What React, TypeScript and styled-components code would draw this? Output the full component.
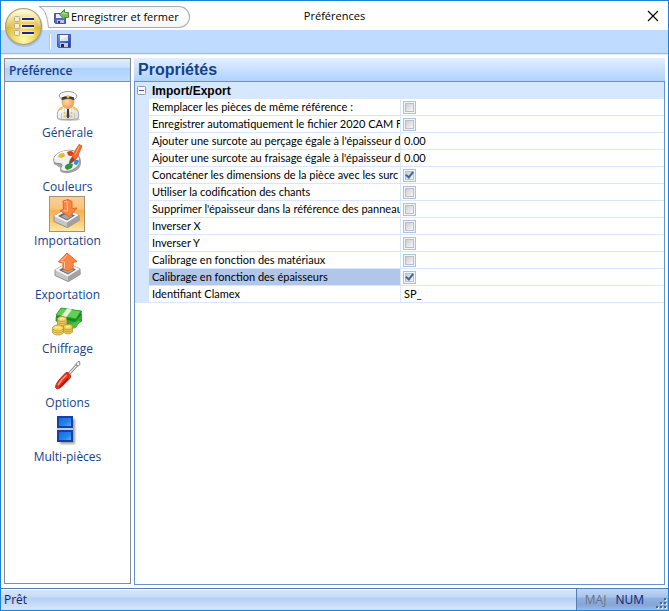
import React, { useState } from "react";
import styled, { createGlobalStyle } from "styled-components";

const GlobalStyle = createGlobalStyle`
  *, *::before, *::after { box-sizing: border-box; }
  body { margin: 0; }
  button, input { font: inherit; color: inherit; margin: 0; padding: 0; border: 0; background: none; }
`;

const uiFont = `"Open Sans", "Noto Sans", sans-serif`;
const headingFont = `"Liberation Sans", Arial, sans-serif`;
const gridFont = `Lato, "Liberation Sans", sans-serif`;

const Window = styled.div`
  display: flex;
  flex-direction: column;
  min-height: 100vh;
  border: 1px solid #1883d7;
  background: #fff;
  font: 12px/18px ${uiFont};
  color: #000;
`;

const TopArea = styled.header`
  display: grid;
  grid-template-columns: 48px 1fr;
  grid-template-rows: 29px 23px;
  background: linear-gradient(#fff 29px, #bfdbff 29px);
  border-bottom: 1px solid #9fbde4;
  box-shadow: 0 1px #e3eefb;
`;

const AppButton = styled.button`
  grid-area: 1 / 1 / 3 / 2;
  display: flex;
  align-items: flex-start;
  padding: 5px 0 0 2px;
`;

const QuickBar = styled.div`
  grid-area: 1 / 2;
  justify-self: start;
  display: flex;
  height: 27px;
  padding-top: 5px;
  margin-left: -10px;
`;

const QuickShape = styled.svg`
  flex: none;
  width: 10px;
  height: 22px;
`;

const SaveClose = styled.button`
  display: flex;
  align-items: center;
  gap: 1px;
  height: 22px;
  padding: 0 10px 0 4px;
  border: solid #a9adb3;
  border-width: 1px 1px 1px 0;
  border-radius: 0 11px 11px 0;
  background: linear-gradient(#f2f4f7, #fff 40%, #f3f5f8);
  font-size: 11px;
  white-space: nowrap;
`;

const Title = styled.h1`
  grid-area: 1 / 1 / 2 / 3;
  place-self: center;
  margin: 0;
  font-size: 11px;
  font-weight: 400;
  pointer-events: none;
`;

const CloseButton = styled.button`
  grid-area: 1 / 2;
  place-self: center end;
  display: flex;
  margin-right: 5px;
  padding: 4px;
`;

const Toolbar = styled.div`
  grid-area: 2 / 2;
  display: flex;
  align-items: center;
  gap: 5px;
  padding-bottom: 1px;
`;

const ToolSeparator = styled.span`
  width: 2px;
  height: 15px;
  border-left: 1px solid #a8c6ee;
  border-right: 1px solid #fff;
`;

const ToolButton = styled.button`
  display: flex;
`;

const Content = styled.main`
  flex: 1;
  display: grid;
  grid-template-columns: 127px minmax(0, 1fr);
  gap: 3px;
  padding: 4px 3px 3px;
`;

const Sidebar = styled.nav`
  border: 1px solid #858b93;
  margin-bottom: 1px;
`;

const SidebarHeading = styled.h2`
  margin: 0;
  height: 23px;
  padding: 0 4px;
  border-bottom: 1px solid #6593cf;
  background: linear-gradient(#e3efff, #c4ddff 9px, #add1ff 9px, #c0dbff);
  color: #15428b;
  font-size: 12px;
  line-height: 24px;
  font-weight: 600;
`;

const NavList = styled.div`
  display: flex;
  flex-direction: column;
  align-items: center;
  padding-top: 6px;
`;

const NavButton = styled.button`
  display: flex;
  flex-direction: column;
  align-items: center;
  color: #15428b;
  white-space: nowrap;
`;

const NavTile = styled.span<{ $active: boolean }>`
  display: flex;
  width: 36px;
  height: 36px;
  padding: 1px;
  border: 1px solid ${(p) => (p.$active ? "#a8916c" : "transparent")};
  background: ${(p) => (p.$active ? "linear-gradient(#f8cf9f, #fbc27a 35%, #fdb14c 40%, #fdc769 70%, #ffe9a6)" : "none")};
`;

const Panel = styled.section`
  display: flex;
  flex-direction: column;
`;

const PanelHeading = styled.h2`
  margin: 0;
  height: 24px;
  padding: 0 4px;
  border-bottom: 1px solid #6593cf;
  background: linear-gradient(#e3efff, #afd2ff);
  color: #15428b;
  font: 700 16px/24px ${headingFont};
`;

const PanelBody = styled.div`
  flex: 1;
  border: 1px solid #6593cf;
  border-top: 0;
`;

const Grid = styled.table`
  width: 100%;
  table-layout: fixed;
  border-spacing: 0;
  font: 11px/16px ${gridFont};
`;

const GutterCol = styled.col`
  width: 14px;
`;

const NameCol = styled.col`
  width: 252px;
`;

const Gutter = styled.td`
  height: 17px;
  padding: 0;
  background: #d6e7ff;
`;

const CategoryName = styled.th`
  height: 17px;
  padding: 0 3px;
  background: #d6e7ff;
  text-align: left;
  font: 700 12px/16px ${headingFont};
`;

const Expander = styled.button`
  display: flex;
  margin: 0 2px;
`;

const NameCell = styled.th<{ $selected: boolean }>`
  height: 17px;
  padding: 0 0 0 3px;
  border: solid #d6e7ff;
  border-width: 0 1px 1px 0;
  background: ${(p) => (p.$selected ? "#b1c6e8" : "#fff")};
  background-clip: padding-box;
  overflow: hidden;
  white-space: nowrap;
  text-align: left;
  font-weight: 400;
`;

const ValueCell = styled.td`
  height: 17px;
  padding: 0 0 0 2px;
  border-bottom: 1px solid #d6e7ff;
`;

const TextValue = styled.input`
  display: block;
  width: 100%;
  height: 16px;
  padding: 0 1px;
  outline: none;
`;

const Check = styled.input`
  appearance: none;
  display: block;
  width: 13px;
  height: 13px;
  border: 1px solid #abc1de;
  background:
    linear-gradient(135deg, #cbcfd5, #f6f6f6) center / 7px 7px no-repeat,
    linear-gradient(#b8bfc9, #b8bfc9) center / 9px 9px no-repeat,
    #f4f4f4;
  &:checked::after {
    content: "";
    display: block;
    width: 5px;
    height: 8px;
    margin: 0 0 0 3px;
    border: solid #3c6aa5;
    border-width: 0 2px 2px 0;
    transform: rotate(38deg);
  }
`;

const StatusBar = styled.footer`
  display: flex;
  height: 22px;
  border-top: 1px solid #567db0;
  background: linear-gradient(#fff 1px, #d7e6f9 1px, #c7dcf8 8px, #b3d0f5 9px, #d7e5f7 20px, #c4daf8);
  color: #15256b;
  line-height: 21px;
`;

const StatusText = styled.span`
  flex: 1;
  padding: 0 3px;
`;

const StatusPane = styled.div`
  display: flex;
  align-items: center;
  gap: 9px;
  padding-left: 8px;
  border-left: 1px solid #567db0;
  background: linear-gradient(#c0d6f5, #a9c4ec 8px, #8fb0e0 9px, #84a5d8 16px, #9dbbe6);
`;

const KeyState = styled.span<{ $on: boolean }>`
  color: ${(p) => (p.$on ? "#14206b" : "#6f747c")};
`;

const Grip = styled.svg`
  align-self: flex-end;
  width: 14px;
  height: 14px;
  margin-left: 1px;
`;

const OrbIcon = () => (
  <svg width="41" height="42" viewBox="0 0 41 42" aria-hidden="true">
    <defs>
      <radialGradient id="orb" cx="50%" cy="86%" r="88%">
        <stop offset="0" stopColor="#fff9b5" />
        <stop offset=".35" stopColor="#f1d85d" />
        <stop offset=".62" stopColor="#d9b644" />
        <stop offset="1" stopColor="#fff4c2" />
      </radialGradient>
      <linearGradient id="orbTop" x1="0" x2="0" y1="0" y2="1">
        <stop offset="0" stopColor="#fffbe2" />
        <stop offset="1" stopColor="#efd36e" stopOpacity=".3" />
      </linearGradient>
    </defs>
    <circle cx="21" cy="22" r="19" fill="#7e91b0" opacity=".35" />
    <circle cx="20.500" cy="20.500" r="18" fill="url(#orb)" stroke="#a7a383" strokeWidth="1.200" />
    <path d="M4 20C3 10 11 4 20.500 4S38 10 37 20Q20 25 4 20Z" fill="url(#orbTop)" />
    {[10, 17, 24].map((y) => (
      <g key={y}>
        <rect x="11.500" y={y + 0.5} width="5" height="5" rx="1" fill="#f3ecd6" stroke="#b5ad90" />
        <path d={`M18 ${y + 3.5}h13`} stroke="#fff5a8" strokeWidth="4" />
        <path d={`M19 ${y + 3}h12`} stroke="#20249a" strokeWidth="2" />
      </g>
    ))}
  </svg>
);

const DiskIcon = () => (
  <svg width="16" height="16" viewBox="0 0 16 16" aria-hidden="true">
    <defs>
      <linearGradient id="disk" x2="1" y2="1">
        <stop stopColor="#8aa4f1" />
        <stop offset=".5" stopColor="#4d69cc" />
        <stop offset="1" stopColor="#252984" />
      </linearGradient>
    </defs>
    <path d="M1.500 1.500h13v13h-12l-1-1Z" fill="url(#disk)" stroke="#4a58b4" />
    <path d="M4 2h8v6H4Z" fill="#f5f9ff" />
    <path d="M4 7l8-4v5H4Z" fill="#d5e2f7" />
    <path d="M4 10h8v4H4Z" fill="#c6cad7" />
    <path d="M5 11h3v3H5Z" fill="#202762" />
  </svg>
);

const SaveCloseIcon = () => (
  <svg width="17" height="16" viewBox="0 0 17 16" aria-hidden="true">
    <path d="M1.500 4.500h11v10h-10l-1-1Z" fill="#5269c3" stroke="#4a52a0" />
    <path d="M3 5h6v4H3Z" fill="#e9f1ff" />
    <path d="M4 11h7v3H4Z" fill="#bfc4d5" />
    <path d="M5 12h2v2H5Z" fill="#252a61" />
    <path d="M6.500 5.500l5-5v3h4v5h-4v2.500Z" fill="#7dbb5f" stroke="#4a8c42" />
    <path d="M9 5l2-1.500v1h3" fill="none" stroke="#b7e59d" />
  </svg>
);

const CaptainIcon = () => (
  <svg width="32" height="32" viewBox="0 0 32 32" aria-hidden="true">
    <defs>
      <linearGradient id="coat" x2="1" y2="1">
        <stop stopColor="#fff" />
        <stop offset="1" stopColor="#d9d9d9" />
      </linearGradient>
      <radialGradient id="face" cx="40%" cy="40%">
        <stop stopColor="#ffdca8" />
        <stop offset="1" stopColor="#f9a758" />
      </radialGradient>
    </defs>
    <ellipse cx="17" cy="29.500" rx="11" ry="1.500" fill="#c4c4c4" />
    <path d="M5.500 28.500q-1-8 3-10.500l4-2h7l4 2q4 2.500 3 10.500l-4 1H9.500Z" fill="url(#coat)" stroke="#a9a9a9" />
    <path d="M12 16.500l4 3 4-3-2 12h-4Z" fill="#fff" stroke="#d0d0d0" strokeWidth=".7" />
    <path d="M15 19h2l.5 8-1.500 1.500-1.500-1.500Z" fill="#3a3d44" />
    <path d="M10 10q0 8.500 6 8.500t6-8.500l-2-3h-8Z" fill="url(#face)" stroke="#e39a50" strokeWidth=".8" />
    <path d="M7 6q1-4.500 9.500-4.500 7.500 0 8.500 5.500l-3 3q-5-3-12 0Z" fill="#f7f7f7" stroke="#9c9c9c" />
    <path d="M9.500 7.500q6-3 12.500 0v2.500q-6-3-12 0Z" fill="#33363d" />
    <circle cx="16" cy="6.500" r="1.500" fill="#f4c537" />
    <path d="M6 19.500l3.500-2 2 1-4.500 2.500ZM26 19.500l-3.500-2-2 1 4.500 2.500Z" fill="#f3c93e" />
    <path d="M9.500 23v6M22.500 23v6" stroke="#bbb" strokeWidth=".8" />
    <circle cx="12.500" cy="23" r="1" fill="#ebbd36" />
    <circle cx="19.500" cy="23" r="1" fill="#ebbd36" />
    <circle cx="12.500" cy="26.500" r="1" fill="#ebbd36" />
    <circle cx="19.500" cy="26.500" r="1" fill="#ebbd36" />
  </svg>
);

const PaletteIcon = () => (
  <svg width="32" height="32" viewBox="0 0 32 32" aria-hidden="true">
    <path d="M3 18Q3 10 12 8q12-3 15 2 5 6 2 13-5 7-16 6-6-1-3-5-3-1-5-3-3 0-2-3Z" fill="#a6a6a6" />
    <path d="M2.500 16.500Q3 10 11 7.500q10-3 15 1 4 6 2 12-5 7-14 7-6-1-4-4 3-4-2-4-5 0-5.500-3Z" fill="#f0f0f0" stroke="#8c8c8c" />
    <path d="M4 15q1-5 8-7 8-2 12 1" fill="none" stroke="#fff" strokeWidth="1.500" />
    <path d="M7 13q1-4 6-4l1 3-3 2Z" fill="#e9bd27" />
    <path d="M16 8q4-2 6 0l1 3q-4 2-6 0Z" fill="#e8371e" />
    <path d="M24 16q3-1 4 1l-2 4q-4 0-3-3Z" fill="#3c86e6" />
    <path d="M14 22q3-4 8-2l-1 4-5 2-2-2Z" fill="#269744" />
    <path d="M18 20q0-5 4-8l3 2q-1 4-7 6Z" fill="#8a5224" />
    <path d="M21 12L28 .5l3 1.500-5.500 12.500-1.500 1Z" fill="#f46a2c" stroke="#e2602a" />
    <path d="M24 11l4.500-9" stroke="#ffb27b" />
  </svg>
);

const TrayIcon = ({ down }: { down: boolean }) => (
  <svg width="32" height="32" viewBox="0 0 32 32" aria-hidden="true">
    <path d="M4 23l13 7 12-8-1-3-12 6Z" fill="#555" opacity=".35" />
    <path d="M3 18l12-7 13 6v5.500l-12 7-13-6Z" fill="#c6c6c6" stroke="#929292" />
    <path d="M3 18l12-7 13 6-12 7.500Z" fill="#f6f6f6" />
    <path d="M7 18l8-4.500 9 4-8 5Z" fill="#666" />
    <path d="M10 18.500l6-3.500 6 3-6 3.500Z" fill="#a7a7a7" />
    <path d="M16 24.500v5l12-7v-5.500Z" fill="#a2a2a2" />
    {down ? (
      <>
        <path d="M12 3l5-1.500 4 2v7l5-.5-7.500 9L9 12.500l3.500-1Z" fill="#fa8644" stroke="#e06a2c" strokeLinejoin="round" />
        <path d="M13 4l3-1 .5 10-4-.5" fill="none" stroke="#ffc49b" />
      </>
    ) : (
      <>
        <path d="M15 1L6.500 10l4.500 1v6l5 2 5-2.500v-6l4-1Z" fill="#fa8644" stroke="#e06a2c" strokeLinejoin="round" />
        <path d="M15 3L9 9.500l3.500.5v6.500" fill="none" stroke="#ffc49b" />
      </>
    )}
  </svg>
);

const MoneyIcon = () => (
  <svg width="32" height="32" viewBox="0 0 32 32" aria-hidden="true">
    <path d="M5 10l5-8 21 3-1 5 1 5-8 6-18-6Z" fill="#178a24" />
    <path d="M5 9l5-7 20 3-5 8Z" fill="#5fd150" stroke="#259a31" strokeWidth=".8" />
    <path d="M16 2.800l5 .8-6 8-5-1.200Z" fill="#e6f4dd" />
    <path d="M5 11l19 4.500 6.500-7.500v5l-6 7L5 15Z" fill="#35a838" stroke="#167f29" strokeWidth=".6" />
    <path d="M11 12.500l5 1.200v4l-5-1.200Z" fill="#d8e9cd" />
    <path d="M15 19l10-3 5-2-5 8-8 2Z" fill="#49c243" />
    {[19, 17, 15, 13].map((y) => (
      <ellipse key={y} cx="11" cy={y} rx="4.500" ry="2.500" fill="#f0d468" stroke="#b58e2c" strokeWidth=".8" />
    ))}
    {[25, 23, 21].map((y) => (
      <ellipse key={y} cx="17" cy={y} rx="4.500" ry="2.800" fill="#f0cf58" stroke="#b58e2c" strokeWidth=".8" />
    ))}
    {[26, 24, 22].map((y) => (
      <ellipse key={y} cx="7" cy={y} rx="5.500" ry="3" fill="#f7dc68" stroke="#b58e2c" strokeWidth=".8" />
    ))}
    <path d="M4 22q3-2 5 0M9 13q2-1 4 0M15 21q2-1 4 0" stroke="#fff7ac" fill="none" />
  </svg>
);

const ScrewdriverIcon = () => (
  <svg width="32" height="32" viewBox="0 0 32 32" aria-hidden="true">
    <path d="M16 15L25 5" stroke="#808080" strokeWidth="3" />
    <path d="M16 15L25 5" stroke="#e8e8e8" strokeWidth="1.200" />
    <path d="M24.500 5.500q-1-2.500 1.500-4l1.500 0 .5 3q-1 2-3.500 1Z" fill="#f0f0f0" stroke="#858585" />
    <path d="M3.500 27.500Q3 23 14 12.500l2 0 2.500 3v2Q8 29.500 5 29Z" fill="#e8311d" stroke="#b5281c" strokeWidth=".9" />
    <path d="M6 25q3-5 8.500-10" stroke="#ff9c88" strokeWidth="1.500" fill="none" />
    <path d="M7 27.500q4-3 9-9" stroke="#b01208" strokeWidth="1.200" fill="none" />
  </svg>
);

const PiecesIcon = () => (
  <svg width="32" height="32" viewBox="0 0 32 32" aria-hidden="true">
    <defs>
      <linearGradient id="piece" x2="1" y2="1">
        <stop stopColor="#1265d6" />
        <stop offset=".6" stopColor="#2486ef" />
        <stop offset="1" stopColor="#65bbff" />
      </linearGradient>
      <filter id="pieceShadow">
        <feGaussianBlur stdDeviation="0.8" />
      </filter>
    </defs>
    <path d="M9 5h15v25H9Z" fill="#777" opacity=".7" filter="url(#pieceShadow)" />
    {[3, 17].map((y) => (
      <rect key={y} x="7" y={y} width="14" height="10" fill="url(#piece)" stroke="#173fa6" strokeWidth="2" />
    ))}
    <path d="M6 15h16" stroke="#c3cbda" strokeWidth="2" />
  </svg>
);

const sections = [
  { label: "Générale", icon: <CaptainIcon /> },
  { label: "Couleurs", icon: <PaletteIcon /> },
  { label: "Importation", icon: <TrayIcon down /> },
  { label: "Exportation", icon: <TrayIcon down={false} /> },
  { label: "Chiffrage", icon: <MoneyIcon /> },
  { label: "Options", icon: <ScrewdriverIcon /> },
  { label: "Multi-pièces", icon: <PiecesIcon /> },
];

const properties: { name: string; value: boolean | string }[] = [
  { name: "Remplacer les pièces de même référence :", value: false },
  { name: "Enregistrer automatiquement le fichier 2020 CAM Ful", value: false },
  { name: "Ajouter une surcote au perçage égale à l'épaisseur d", value: "0.00" },
  { name: "Ajouter une surcote au fraisage égale à l'épaisseur d", value: "0.00" },
  { name: "Concaténer les dimensions de la pièce avec les surc", value: true },
  { name: "Utiliser la codification des chants", value: false },
  { name: "Supprimer l'épaisseur dans la référence des panneau", value: false },
  { name: "Inverser X", value: false },
  { name: "Inverser Y", value: false },
  { name: "Calibrage en fonction des matériaux", value: false },
  { name: "Calibrage en fonction des épaisseurs", value: true },
  { name: "Identifiant Clamex", value: "SP_" },
];

export default function App() {
  const [active, setActive] = useState("Importation");
  const [selected, setSelected] = useState(10);
  const [open, setOpen] = useState(true);

  return (
    <Window>
      <GlobalStyle />
      <TopArea>
        <AppButton aria-label="Menu">
          <OrbIcon />
        </AppButton>
        <QuickBar>
          <QuickShape viewBox="0 0 10 22" aria-hidden="true">
            <path d="M0 .5Q8 3 9.500 21.500H10V.5Z" fill="#f7f8fa" />
            <path d="M0 .5H10M0 .5Q8 3 9.500 21.500H10" fill="none" stroke="#a9adb3" />
          </QuickShape>
          <SaveClose>
            <SaveCloseIcon />
            Enregistrer et fermer
          </SaveClose>
        </QuickBar>
        <Title>Préférences</Title>
        <CloseButton aria-label="Fermer">
          <svg width="12" height="12" viewBox="0 0 12 12" aria-hidden="true">
            <path d="M1 1l10 10M11 1L1 11" stroke="#000" strokeWidth="1.100" />
          </svg>
        </CloseButton>
        <Toolbar>
          <ToolSeparator />
          <ToolButton aria-label="Enregistrer">
            <DiskIcon />
          </ToolButton>
        </Toolbar>
      </TopArea>

      <Content>
        <Sidebar aria-label="Préférence">
          <SidebarHeading>Préférence</SidebarHeading>
          <NavList>
            {sections.map(({ label, icon }) => (
              <NavButton key={label} aria-pressed={label === active} onClick={() => setActive(label)}>
                <NavTile $active={label === active}>{icon}</NavTile>
                {label}
              </NavButton>
            ))}
          </NavList>
        </Sidebar>

        <Panel>
          <PanelHeading>Propriétés</PanelHeading>
          <PanelBody>
            <Grid>
              <colgroup>
                <GutterCol />
                <NameCol />
                <col />
              </colgroup>
              <tbody>
                <tr>
                  <Gutter>
                    <Expander aria-label="Import/Export" aria-expanded={open} onClick={() => setOpen(!open)}>
                      <svg width="9" height="9" viewBox="0 0 9 9" aria-hidden="true">
                        <rect x=".5" y=".5" width="8" height="8" rx="1" fill="#f7f7f3" stroke="#8c9bb0" />
                        <path d={open ? "M2 4.500h5" : "M2 4.500h5M4.500 2v5"} stroke="#3a5a9a" />
                      </svg>
                    </Expander>
                  </Gutter>
                  <CategoryName colSpan={2}>Import/Export</CategoryName>
                </tr>
                {open &&
                  properties.map(({ name, value }, i) => (
                    <tr key={name} onClick={() => setSelected(i)}>
                      <Gutter />
                      <NameCell $selected={i === selected}>
                        <label htmlFor={`property-${i}`}>{name}</label>
                      </NameCell>
                      <ValueCell>
                        {typeof value === "boolean" ? (
                          <Check id={`property-${i}`} type="checkbox" defaultChecked={value} />
                        ) : (
                          <TextValue id={`property-${i}`} type="text" defaultValue={value} />
                        )}
                      </ValueCell>
                    </tr>
                  ))}
              </tbody>
            </Grid>
          </PanelBody>
        </Panel>
      </Content>

      <StatusBar>
        <StatusText>Prêt</StatusText>
        <StatusPane>
          <KeyState $on={false}>MAJ</KeyState>
          <KeyState $on>NUM</KeyState>
          <Grip viewBox="0 0 14 14" aria-hidden="true">
            {[[10, 2], [6, 6], [10, 6], [2, 10], [6, 10], [10, 10]].map(([x, y]) => (
              <g key={`${x}-${y}`}>
                <rect x={x + 1} y={y + 1} width="2" height="2" fill="#dce9fa" />
                <rect x={x} y={y} width="2" height="2" fill="#456797" />
              </g>
            ))}
          </Grip>
        </StatusPane>
      </StatusBar>
    </Window>
  );
}
